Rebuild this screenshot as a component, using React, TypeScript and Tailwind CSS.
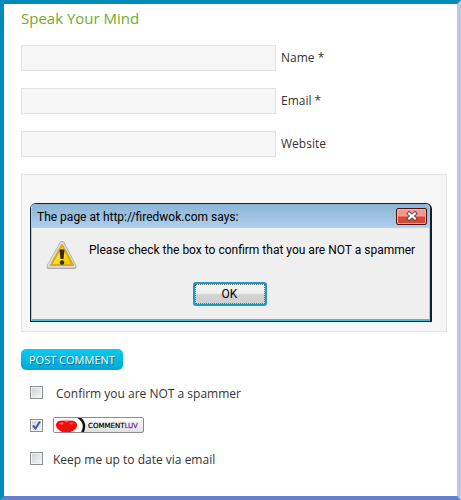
import { useState } from 'react'

const fields = [
  { id: 'name', label: 'Name *', type: 'text' },
  { id: 'email', label: 'Email *', type: 'email' },
  { id: 'website', label: 'Website', type: 'url' },
]

function WarningIcon() {
  return (
    <svg width="32" height="30" viewBox="0 0 32 30" aria-hidden="true">
      <defs>
        <linearGradient id="warn" x1="0" y1="0" x2="1" y2="1">
          <stop offset="0" stopColor="#e8c81c" />
          <stop offset="0.5" stopColor="#ffe21a" />
          <stop offset="1" stopColor="#eeb400" />
        </linearGradient>
      </defs>
      <path d="M16 3.5 L28 26.5 H3 Z" fill="#a8a8a8" stroke="#a8a8a8" strokeWidth="5" strokeLinejoin="round" />
      <path d="M16 3.5 L28 26 H3 Z" fill="#dcdcdc" stroke="#dcdcdc" strokeWidth="3.5" strokeLinejoin="round" />
      <path d="M16 5 L27 25 H5 Z" fill="url(#warn)" stroke="#d9aa12" strokeWidth="2" strokeLinejoin="round" />
      <path d="M13.5 10 Q16 8.500 18.500 10 L17.5 19 H14.5 Z" fill="#332b10" />
      <circle cx="16" cy="22.5" r="2.2" fill="#332b10" />
    </svg>
  )
}

function Dialog({ onClose }: { onClose: () => void }) {
  return (
    <div
      role="alertdialog"
      aria-labelledby="dialog-title"
      aria-describedby="dialog-text"
      className="absolute top-[29px] left-[9px] right-[15px] rounded-t-md border border-[#10242e] border-r-2 bg-[#efefef] font-[Roboto,'Open_Sans',sans-serif] text-black"
    >
      <div className="rounded-t border-x border-b-2 border-x-[#8fd6e8] border-b-[#45bcd2]">
        <div className="flex h-6 items-center justify-between rounded-t bg-linear-to-b from-[#8db4d3] to-[#add0ee] pr-[2px] pl-[5px]">
          <h2 id="dialog-title" className="pt-px text-[12px] leading-4 whitespace-nowrap">The page at http://firedwok.com says:</h2>
          <button
            type="button"
            aria-label="Close"
            onClick={onClose}
            className="flex h-[17px] w-[31px] items-center justify-center rounded-xs border border-[#4b1414] bg-linear-to-b from-[#ef9a8c] from-45% to-[#dc4433] to-55% shadow-[inset_0_0_0_1px_#f3b0a4]"
          >
            <svg width="12" height="10" viewBox="0 0 12 10" aria-hidden="true">
              <path d="M3 2.5 L9 7.5 M9 2.5 L3 7.5" stroke="#5c4a50" strokeWidth="4" strokeLinecap="square" />
              <path d="M3 2.5 L9 7.5 M9 2.5 L3 7.5" stroke="#fff" strokeWidth="2" strokeLinecap="square" />
            </svg>
          </button>
        </div>
        <div className="flex items-start pt-3 pl-[14px]">
          <WarningIcon />
          <p id="dialog-text" className="ml-[11px] pt-[2px] text-[12px] leading-4 whitespace-nowrap">
            Please check the box to confirm that you are NOT a spammer
          </p>
        </div>
        <div className="flex justify-center pt-3 pr-[2px] pb-[13px]">
          <button
            type="button"
            onClick={onClose}
            className="h-6 w-[74px] rounded-[3px] border-2 border-[#1b9cc4] bg-linear-to-b from-[#f1f1f1] from-45% to-[#d2d2d2] to-55% text-[12px] leading-4"
          >
            <span className="flex h-full items-center justify-center border border-dotted border-[#6b6b6b]">OK</span>
          </button>
        </div>
      </div>
    </div>
  )
}

function CommentLuvBadge() {
  return (
    <svg width="91" height="16" viewBox="0 0 91 16" role="img" aria-label="CommentLuv">
      <defs>
        <linearGradient id="badge" x1="0" y1="0" x2="0" y2="1">
          <stop offset="0" stopColor="#ffffff" />
          <stop offset="1" stopColor="#dedede" />
        </linearGradient>
        <radialGradient id="glow">
          <stop offset="0.6" stopColor="#ff5a5a" />
          <stop offset="1" stopColor="#ffffff" stopOpacity="0" />
        </radialGradient>
        <clipPath id="inner">
          <rect x="1" y="1" width="89" height="14" />
        </clipPath>
      </defs>
      <rect x="0.5" y="0.5" width="90" height="15" rx="1.5" fill="url(#badge)" stroke="#8c8c8c" />
      <g clipPath="url(#inner)">
        <path d="M1 1 H25 Q31 4 31 9 Q31 13 28 15 H1 Z" fill="#fff" />
        <path d="M25 0 Q31 4 31 9 Q31 13 29 16" fill="none" stroke="#111" strokeWidth="2.500" />
        <ellipse cx="14" cy="9" rx="13" ry="8" fill="url(#glow)" />
        <path d="M13.500 5.500 C11 2.500 3 3 3 8 C3 12 8 14 11 16 H16 C19 14 24 12 24 8 C24 3 16 2.500 13.500 5.500 Z" fill="#f20d0d" />
        <ellipse cx="8.500" cy="6.500" rx="2" ry="1" fill="#ff7b7b" />
        <ellipse cx="18.500" cy="6.500" rx="2" ry="1" fill="#ff5050" />
      </g>
      <text x="35" y="11" fontSize="7" fontFamily="'DejaVu Sans', sans-serif" fill="#000" stroke="#000" strokeWidth="0.2">
        COMMENT<tspan fill="#6a1b9a" stroke="#6a1b9a">LUV</tspan>
      </text>
    </svg>
  )
}

interface CheckProps {
  id: string
  checked: boolean
  onChange: (checked: boolean) => void
}

function Check({ id, checked, onChange }: CheckProps) {
  return (
    <span className="grid size-[13px] shrink-0">
      <input
        id={id}
        type="checkbox"
        checked={checked}
        onChange={e => onChange(e.target.checked)}
        className="col-start-1 row-start-1 size-[13px] appearance-none border border-[#8e8f8f] bg-linear-to-br from-[#cfd2d6] to-[#f6f6f6] shadow-[inset_0_0_0_1px_#f4f4f4]"
      />
      {checked && (
        <svg className="pointer-events-none col-start-1 row-start-1" width="13" height="13" viewBox="0 0 13 13" aria-hidden="true">
          <path d="M3 6.5 L5.5 9.5 L10 2.500" fill="none" stroke="#3f5f9f" strokeWidth="2" />
        </svg>
      )}
    </span>
  )
}

export default function App() {
  const [open, setOpen] = useState(true)
  const [human, setHuman] = useState(false)
  const [luv, setLuv] = useState(true)
  const [updates, setUpdates] = useState(false)

  return (
    <main className="min-h-screen border-4 border-t-[#008cba] border-r-[#b9c8e8] border-b-[#6480cc] border-l-[#008cba] bg-white pr-[10px] pl-[17px] font-['Open_Sans','Noto_Sans',sans-serif] text-[12px] leading-4 text-[#333]">
      <form onSubmit={e => e.preventDefault()}>
        <h1 className="pt-1 text-[15px] leading-5 text-[#74a82c]">Speak Your Mind</h1>

        <div className="mt-[17px] flex flex-col gap-[17px]">
          {fields.map(field => (
            <div key={field.id} className="flex items-center gap-[5px]">
              <input id={field.id} type={field.type} className="h-[26px] w-[255px] border border-[#e3e3e3] bg-[#f6f6f6] px-1" />
              <label htmlFor={field.id}>{field.label}</label>
            </div>
          ))}
        </div>

        {/* Comment box with the alert on top */}
        <div className="relative mt-[17px]">
          <textarea aria-label="Comment" className="block h-[158px] w-full resize-none border border-[#e3e3e3] bg-[#f6f6f6] p-1" />
          {open && <Dialog onClose={() => setOpen(false)} />}
        </div>

        <button
          type="submit"
          className="mt-[17px] block h-[21px] rounded-[5px] bg-linear-to-b from-[#08cbee] to-[#00a8d4] px-2 text-[11px] leading-4 whitespace-nowrap text-white [text-shadow:1px_1px_0_#16708a]"
        >
          POST COMMENT
        </button>

        <div className="mt-[14px] flex flex-col gap-[17px] pl-[9px]">
          <div className="flex h-4 items-center gap-[13px]">
            <Check id="human" checked={human} onChange={setHuman} />
            <label htmlFor="human" className="pt-1">Confirm you are NOT a spammer</label>
          </div>
          <div className="flex h-4 items-center gap-[10px]">
            <Check id="luv" checked={luv} onChange={setLuv} />
            <label htmlFor="luv"><CommentLuvBadge /></label>
          </div>
          <div className="flex h-4 items-center gap-[10px]">
            <Check id="updates" checked={updates} onChange={setUpdates} />
            <label htmlFor="updates" className="pt-1">Keep me up to date via email</label>
          </div>
        </div>
      </form>
    </main>
  )
}
